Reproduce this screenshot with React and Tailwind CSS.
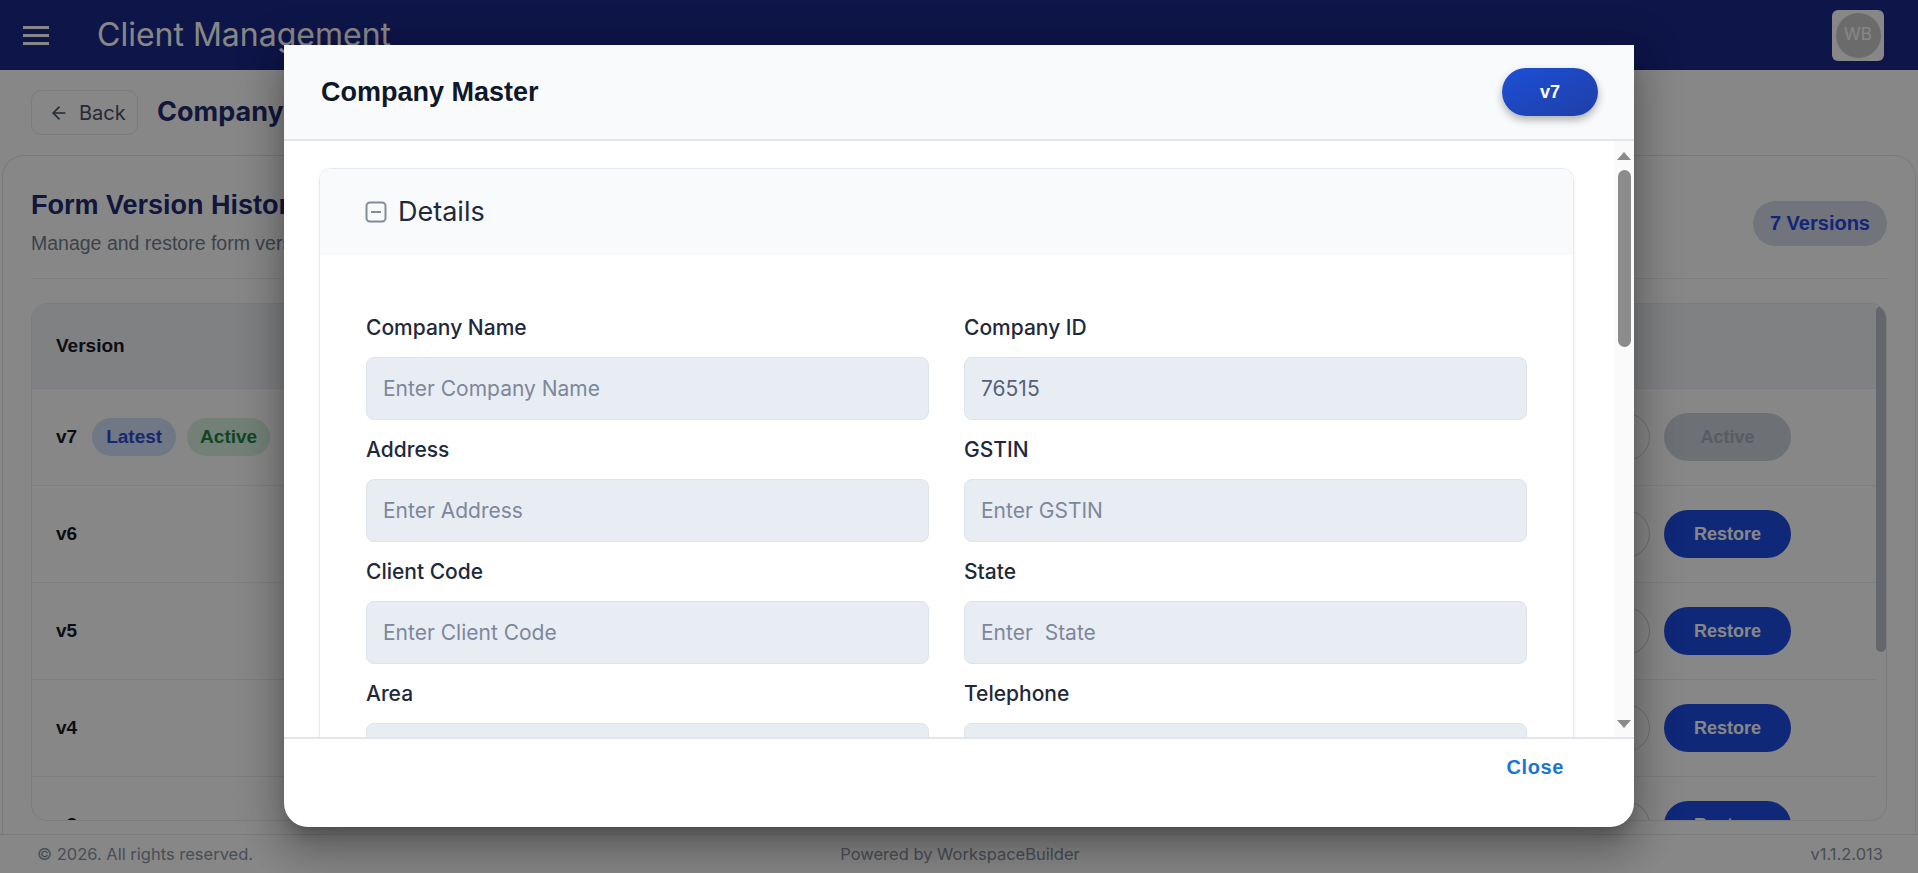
import React from "react";
import { ArrowLeft } from "lucide-react";

const fields = [
  ["Company Name", "Enter Company Name", false],
  ["Company ID", "76515", true],
  ["Address", "Enter Address", false],
  ["GSTIN", "Enter GSTIN", false],
  ["Client Code", "Enter Client Code", false],
  ["State", "Enter\u00a0 State", false],
  ["Area", "", false],
  ["Telephone", "", false],
];

const rows = [
  { v: "v7", current: true },
  { v: "v6" },
  { v: "v5" },
  { v: "v4" },
  { v: "v3" },
];

function Field({ label, value, filled }) {
  return (
    <div className="flex flex-col">
      <div className="mb-[17px] text-[21px] font-medium leading-[24px] text-[#1e293b]">
        {label}
      </div>
      <div
        className={
          "flex h-[63px] items-center rounded-[8px] border border-[#dce3eb] bg-[#e8edf3] px-[16px] text-[21px] " +
          (filled ? "text-[#566179]" : "text-[#7d879c]")
        }
      >
        {value}
      </div>
    </div>
  );
}

export default function App() {
  return (
    <div className="relative flex h-[873px] w-full flex-col overflow-hidden bg-white font-['Inter',sans-serif]">
      {/* App bar */}
      <header className="flex h-[70px] shrink-0 items-center bg-[#1c2888] pl-[23px] pr-[34px]">
        <div className="flex w-[26px] flex-col gap-[5px]">
          <span className="h-[3px] bg-white" />
          <span className="h-[3px] bg-white" />
          <span className="h-[3px] bg-white" />
        </div>
        <div className="ml-[48px] text-[32px] leading-none text-white">Client Management</div>
        <div className="ml-auto flex h-[51px] w-[52px] items-center justify-center rounded-[6px] bg-white">
          <div className="flex h-[45px] w-[45px] items-center justify-center rounded-full bg-[#cbcbcb] text-[17px] text-white">
            WB
          </div>
        </div>
      </header>

      {/* Main */}
      <main className="flex min-h-0 flex-1 flex-col">
        <div className="flex h-[85px] shrink-0 items-center gap-[19px] pl-[31px]">
          <div className="flex h-[45px] w-[107px] items-center gap-[10px] rounded-[10px] border border-[#e8e8e8] pl-[17px] text-[20px] text-[#475066]">
            <ArrowLeft size={20} strokeWidth={2} />
            <span>Back</span>
          </div>
          <div className="text-[27px] font-bold text-[#242d6e]">Company Master Version History</div>
        </div>

        <div className="mx-[2px] flex min-h-0 flex-1 flex-col overflow-hidden rounded-t-[22px] border border-b-0 border-[#e5e7eb] px-[28px] pt-[33px] font-['Liberation_Sans',Arial,sans-serif]">
          <div className="flex items-center justify-between">
            <div>
              <h2 className="text-[27px] font-bold leading-[32px] text-[#222a70]">Form Version History</h2>
              <p className="mt-[8px] text-[19.5px] leading-[28px] text-[#727d8f]">
                Manage and restore form versions
              </p>
            </div>
            <div className="flex h-[45px] items-center rounded-full bg-[#d6dbe8] px-[17px] text-[20px] font-bold text-[#2447e6]">
              7 Versions
            </div>
          </div>
          <div className="mt-[21px] h-px shrink-0 bg-[#e6ecf3]" />

          <div className="mt-[24px] flex h-[518px] shrink-0 overflow-hidden rounded-[16px] border border-[#e6ebf1]">
            <div className="flex flex-1 flex-col">
              <div className="flex h-[85px] shrink-0 items-center border-b border-[#e6ebf1] bg-[#f0f3f8] pl-[24px] text-[19px] font-bold text-[#181c26]">
                Version
              </div>
              {rows.map((r) => (
                <div
                  key={r.v}
                  className="flex h-[97px] shrink-0 items-center border-b border-[#eceff4] pl-[24px] pr-[85px]"
                >
                  <span className="text-[19px] font-bold text-[#181c26]">{r.v}</span>
                  {r.current && (
                    <>
                      <span className="ml-[15px] flex h-[38px] items-center rounded-full bg-[#d3e1fb] px-[14px] text-[19px] font-bold text-[#2f4bd0]">
                        Latest
                      </span>
                      <span className="ml-[11px] flex h-[38px] items-center rounded-full bg-[#d9f2e2] px-[13px] text-[19px] font-bold text-[#22853f]">
                        Active
                      </span>
                    </>
                  )}
                  <div className="ml-auto flex items-center gap-[14px]">
                    <div className="h-[48px] w-[48px] rounded-full border border-[#d0d0d0]" />
                    {r.current ? (
                      <div className="flex h-[48px] w-[127px] items-center justify-center rounded-full bg-[#cfd5de] text-[18px] font-bold text-[#a9afb9]">
                        Active
                      </div>
                    ) : (
                      <div className="flex h-[48px] w-[127px] items-center justify-center rounded-full bg-[#1d4fe3] text-[18px] font-bold text-white">
                        Restore
                      </div>
                    )}
                  </div>
                </div>
              ))}
            </div>
            <div className="w-[10px] shrink-0 pt-[2px]">
              <div className="h-[346px] w-[10px] rounded-full bg-[#bcc1c9]" />
            </div>
          </div>
        </div>
      </main>

      {/* Footer */}
      <footer className="flex h-[39px] shrink-0 items-center border-t border-[#e8e8e8] pl-[37px] pr-[35px] text-[16.5px] text-[#8a93a2]">
        <div className="flex-1">© 2026. All rights reserved.</div>
        <div className="flex-1 text-center">Powered by WorkspaceBuilder</div>
        <div className="flex-1 text-right">v1.1.2.013</div>
      </footer>

      {/* Backdrop */}
      <div className="absolute inset-0 bg-black/[0.47]" />

      {/* Dialog (top clipped under the app edge, as in the capture) */}
      <div className="absolute inset-x-0 bottom-[46px] top-[45px] flex justify-center">
        <div className="flex h-[782px] w-[1350px] flex-col overflow-hidden rounded-b-[24px] bg-white shadow-[0_11px_15px_-7px_rgba(0,0,0,0.25),0_24px_38px_3px_rgba(0,0,0,0.18),0_9px_46px_8px_rgba(0,0,0,0.16)]">
          <div className="flex h-[96px] shrink-0 items-center justify-between border-b-2 border-[#e2e6ec] bg-[#f8fafc] pl-[37px] pr-[36px]">
            <div className="font-['Liberation_Sans',Arial,sans-serif] text-[27px] font-bold text-[#0f172a]">
              Company Master
            </div>
            <div className="flex h-[48px] w-[96px] items-center justify-center rounded-full bg-gradient-to-br from-[#1d4fd6] to-[#1e3fa8] font-['Liberation_Sans',Arial,sans-serif] text-[18px] font-bold text-white shadow-[0_4px_8px_rgba(0,0,0,0.3)]">
              v7
            </div>
          </div>

          <div className="flex min-h-0 flex-1">
            <div className="min-w-0 flex-1 overflow-hidden pl-[35px] pr-[40px] pt-[27px]">
              <div className="overflow-hidden rounded-[12px] border border-[#e6eaf0] shadow-[0_1px_4px_rgba(0,0,0,0.06)]">
                <div className="flex h-[86px] items-center gap-[11px] bg-[#f9fafb] pl-[45px]">
                  <svg width="22" height="22" viewBox="0 0 22 22" fill="none">
                    <rect x="1.5" y="1.5" width="19" height="19" rx="3.5" stroke="#838c9b" strokeWidth="2" />
                    <line x1="6" y1="11" x2="16" y2="11" stroke="#838c9b" strokeWidth="2" />
                  </svg>
                  <span className="text-[27px] text-[#1e293b]">Details</span>
                </div>
                <div className="grid grid-cols-2 gap-x-[35px] gap-y-[18px] bg-white px-[46px] pb-[40px] pt-[61px]">
                  {fields.map(([l, v, f]) => (
                    <Field key={l} label={l} value={v} filled={f} />
                  ))}
                </div>
              </div>
            </div>
            <div className="flex w-[20px] shrink-0 flex-col items-center bg-[#fafafa] pt-[11px]">
              <svg width="14" height="8" viewBox="0 0 14 8">
                <polygon points="7,0 14,8 0,8" fill="#8a8a8a" />
              </svg>
              <div className="mt-[10px] h-[177px] w-[13px] rounded-full bg-[#8c8c8c]" />
              <svg className="mb-[9px] mt-auto" width="14" height="8" viewBox="0 0 14 8">
                <polygon points="0,0 14,0 7,8" fill="#8a8a8a" />
              </svg>
            </div>
          </div>

          <div className="flex h-[90px] shrink-0 items-start justify-end border-t-2 border-[#e2e6ec] pr-[54px] pt-[11px]">
            <button className="px-[16px] py-[6px] font-['Liberation_Sans',Arial,sans-serif] text-[20px] font-bold leading-[22px] tracking-[0.03em] text-[#1976d2]">
              Close
            </button>
          </div>
        </div>
      </div>
    </div>
  );
}
